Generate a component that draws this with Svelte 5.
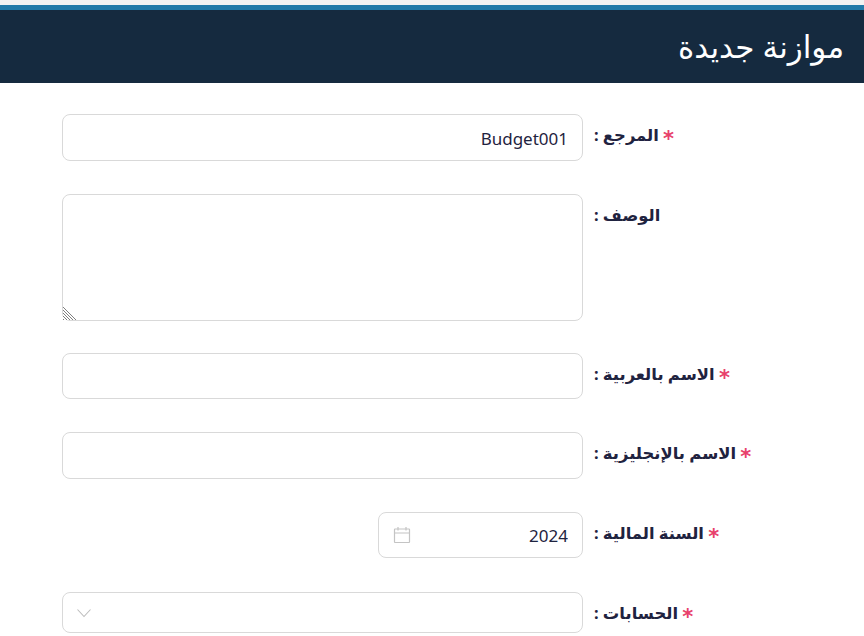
<script lang="ts">
  let ref = $state('Budget001');
  let year = $state('2024');
</script>

<div class="page" dir="rtl">
  <header class="head">
    <h1>موازنة جديدة</h1>
  </header>

  <form class="form">
    <div class="row">
      <label for="ref"><span class="req">*</span> المرجع :</label>
      <input id="ref" type="text" bind:value={ref} />
    </div>

    <div class="row row-area">
      <label for="desc">الوصف :</label>
      <textarea id="desc"></textarea>
    </div>

    <div class="row">
      <label for="name-ar"><span class="req">*</span> الاسم بالعربية :</label>
      <input id="name-ar" type="text" />
    </div>

    <div class="row">
      <label for="name-en"><span class="req">*</span> الاسم بالإنجليزية :</label>
      <input id="name-en" type="text" />
    </div>

    <div class="row row-year">
      <label for="year"><span class="req">*</span> السنة المالية :</label>
      <div class="year-box">
        <input id="year" type="text" bind:value={year} />
        <svg class="cal" width="18" height="18" viewBox="0 0 18 18" fill="none" stroke="#c4c4c4" stroke-width="1.2">
          <rect x="1.500" y="3" width="15" height="13.500" rx="0.5" />
          <path d="M1.500 7h15M5 1v3.500M13 1v3.500" />
        </svg>
      </div>
    </div>

    <div class="row">
      <label for="accounts"><span class="req">*</span> الحسابات :</label>
      <div class="select-box" id="accounts">
        <svg width="16" height="10" viewBox="0 0 16 10" fill="none" stroke="#bdbdbd" stroke-width="1.1">
          <path d="M1.500 1.500 8 8.500l6.500-7" />
        </svg>
      </div>
    </div>
  </form>
</div>

<style>
  :global(body) {
    margin: 0;
    background: #fff;
  }

  .page {
    font-family: "Noto Sans", "DejaVu Sans", sans-serif;
    color: #1f2340;
    height: 636px;
    overflow: hidden;
    border-top: 5px solid #f2f2f2;
    box-sizing: border-box;
  }

  .head {
    background: #152a3f;
    border-top: 5px solid #2179a8;
    height: 73px;
    display: flex;
    align-items: center;
    padding: 0 20px;
  }

  h1 {
    margin: 0;
    font-size: 31px;
    font-weight: 400;
    color: #fff;
    line-height: 1;
  }

  .form {
    display: flex;
    flex-direction: column;
    gap: 33px;
    padding: 31px 0 0 62px;
  }

  .row {
    display: grid;
    grid-template-columns: 1fr 521px;
    column-gap: 11px;
    align-items: start;
  }

  .row-area {
    margin-bottom: -1px;
  }

  .row-year {
    margin-bottom: 1px;
  }

  label {
    font-size: 16.4px;
    font-weight: 700;
    line-height: 42px;
    white-space: nowrap;
    text-align: left;
  }

  .req {
    color: #e8416b;
    font-family: "DejaVu Sans", sans-serif;
    font-size: 21px;
    line-height: 1;
    vertical-align: -5px;
  }

  input,
  textarea {
    display: block;
    width: 100%;
    box-sizing: border-box;
    border: 1px solid #d9d9d9;
    border-radius: 8px;
    background: #fff;
    font-family: inherit;
    font-size: 17px;
    color: #1f2340;
    padding: 2px 14px 0;
    height: 46.5px;
    outline: none;
  }

  textarea {
    height: 127px;
    resize: both;
  }

  textarea::-webkit-resizer {
    background:
      linear-gradient(to top right, transparent 50%, #fff 50%),
      repeating-linear-gradient(45deg, #808080 0 1px, #fff 1px 2.2px);
  }

  .year-box {
    position: relative;
    width: 205px;
  }

  .cal {
    position: absolute;
    left: 15px;
    top: 14px;
  }

  .select-box {
    height: 41px;
    box-sizing: border-box;
    border: 1px solid #d9d9d9;
    border-radius: 8px;
    display: flex;
    align-items: center;
    padding-left: 13px;
    justify-content: flex-end;
  }
</style>
